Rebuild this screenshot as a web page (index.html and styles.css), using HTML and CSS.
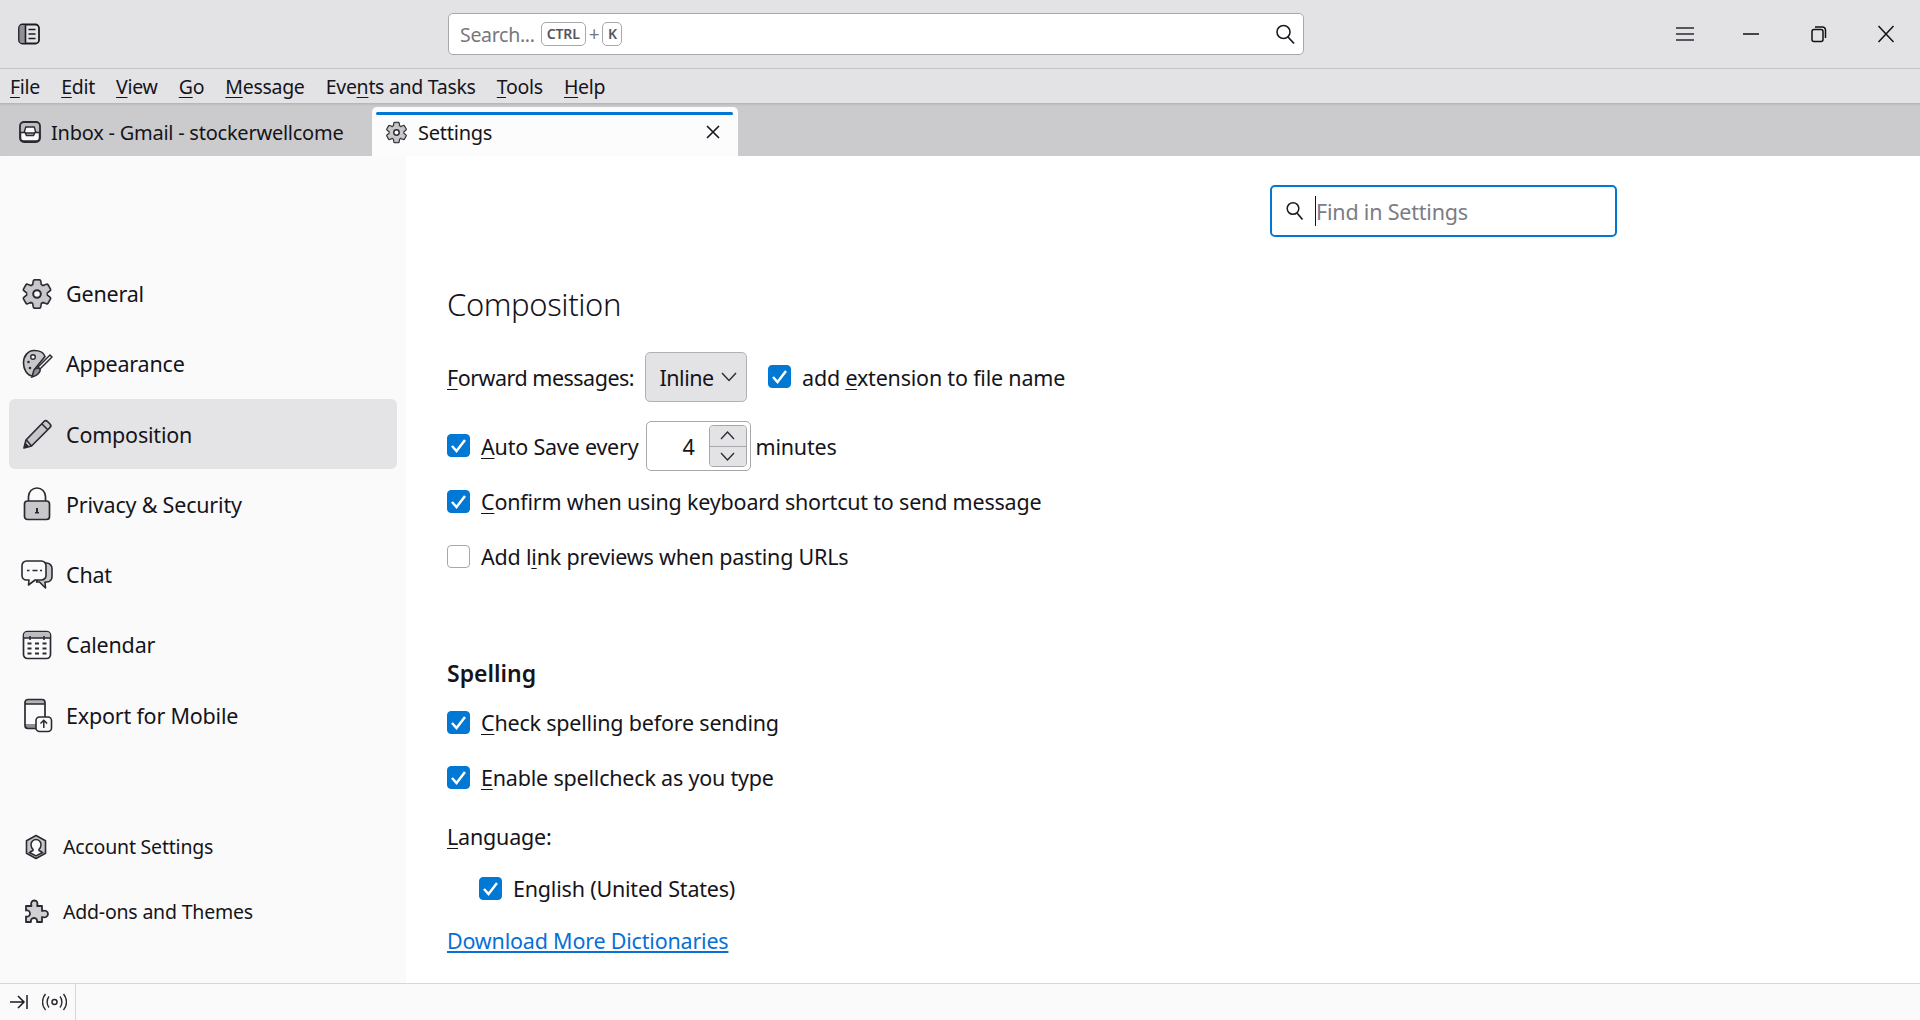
FILE: index.html
```html
<!DOCTYPE html>
<html lang="en">
<head>
  <meta charset="UTF-8">
  <title>Settings</title>
  <link rel="stylesheet" href="styles.css">
</head>
<body>
  <div class="titlebar">
    <svg class="spaces-btn" width="24" height="24" viewBox="0 0 24 24"><rect x="2" y="2.500" width="20" height="19" rx="3.500" fill="none" stroke="#1c1b22" stroke-width="1.800"/><path d="M2.500 4.500a2 2 0 0 1 2-1.500H8v18H4.500a2 2 0 0 1-2-2z" fill="#8f8f96"/><path d="M8.500 3v18M11.500 7.500h7M11.500 12h7M11.500 16.500h7" stroke="#1c1b22" stroke-width="1.600" fill="none"/></svg>
    <div class="global-search">
      <span class="search-text">Search...</span>
      <span class="key key-ctrl">CTRL</span>
      <span class="plus">+</span>
      <span class="key">K</span>
      <svg class="search-end" width="22" height="22" viewBox="0 0 22 22"><circle cx="9.500" cy="9" r="6.500" fill="none" stroke="#1c1b22" stroke-width="1.600"/><path d="M14 14l6 6.500" stroke="#1c1b22" stroke-width="1.800"/></svg>
    </div>
    <div class="win-btns">
      <svg class="win-menu" width="18" height="18" viewBox="0 0 18 18"><path d="M0 3h18M0 9h18M0 15h18" stroke="#2b2a33" stroke-width="1.700"/></svg>
      <svg width="16" height="18" viewBox="0 0 16 18"><path d="M0 9h16" stroke="#111" stroke-width="1.500"/></svg>
      <svg class="win-restore" width="18" height="18" viewBox="0 0 18 18"><rect x="2" y="4.500" width="11" height="12" rx="2" fill="none" stroke="#111" stroke-width="1.500"/><path d="M5 2h7.500a3 3 0 0 1 3 3v8" fill="none" stroke="#111" stroke-width="1.500"/></svg>
      <svg width="18" height="18" viewBox="0 0 18 18"><path d="M1.500 1l15 16M16.500 1l-15 16" stroke="#111" stroke-width="1.500"/></svg>
    </div>
  </div>

  <div class="menubar">
    <span><u>F</u>ile</span>
    <span><u>E</u>dit</span>
    <span><u>V</u>iew</span>
    <span><u>G</u>o</span>
    <span><u>M</u>essage</span>
    <span>Eve<u>n</u>ts and Tasks</span>
    <span><u>T</u>ools</span>
    <span><u>H</u>elp</span>
  </div>

  <div class="tabbar">
    <div class="tab">
      <svg width="22" height="22" viewBox="0 0 22 22"><rect x="1" y="1" width="20" height="20" rx="4" fill="#bdbdc1" stroke="#2b2a33" stroke-width="1.800"/><path d="M5 12l1.800-6h8.400l1.800 6z" fill="#fafafa" stroke="#2b2a33" stroke-width="1.400"/><path d="M1.500 11.500h4.500l1.500 3h7l1.500-3h4.500v5.500a3 3 0 0 1-3 3H4.500a3 3 0 0 1-3-3z" fill="#fafafa" stroke="#2b2a33" stroke-width="1.500"/></svg>
      <span>Inbox - Gmail - stockerwellcome</span>
    </div>
    <div class="tab tab-active">
      <svg width="23" height="23" viewBox="0 0 32 32"><use href="#gear"/></svg>
      <span>Settings</span>
      <svg class="tab-close" width="14" height="14" viewBox="0 0 14 14"><path d="M1 1l12 12M13 1L1 13" stroke="#1c1b22" stroke-width="1.700"/></svg>
    </div>
  </div>

  <svg class="defs" width="0" height="0">
    <defs>
      <path id="gear-shape" d="M12.410 6.130L13.140 1.280H18.860L19.590 6.130L22.750 7.960L27.320 6.160L30.180 11.110L26.340 14.180V17.820L30.180 20.890L27.320 25.840L22.750 24.040L19.590 25.870L18.860 30.720H13.140L12.410 25.870L9.250 24.040L4.680 25.840L1.820 20.890L5.660 17.820V14.180L1.820 11.110L4.680 6.160L9.250 7.960z" transform="translate(16 16) scale(.88) translate(-16 -16)" stroke-linejoin="round"/>
      <g id="gear">
        <use href="#gear-shape" fill="#2b2a33" stroke="#2b2a33" stroke-width="4.600"/>
        <use href="#gear-shape" fill="#c8c8cb" stroke="#c8c8cb" stroke-width="1"/>
        <circle cx="16" cy="16" r="3.800" fill="#fafafa" stroke="#2b2a33" stroke-width="2"/>
      </g>
    </defs>
  </svg>

  <div class="main">
    <div class="sidebar">
      <div class="nav-top">
        <div class="nav-item">
          <svg width="32" height="32" viewBox="0 0 32 32"><use href="#gear"/></svg>
          <span>General</span>
        </div>
        <div class="nav-item">
          <svg width="32" height="32" viewBox="0 0 32 32"><path d="M13 2.500c6 0 10 2.500 11 6l-9 11c-1 1-1.500 3-1 5 .5 2-.5 4-3 3.500C6 27 2.500 21.500 2.500 15 2.500 8 7 2.500 13 2.500z" fill="#c8c8cb" stroke="#2b2a33" stroke-width="1.600"/><circle cx="12" cy="9" r="2.300" fill="#fafafa" stroke="#2b2a33" stroke-width="1.400"/><circle cx="7.500" cy="14" r="1.300" fill="#2b2a33"/><circle cx="9" cy="20" r="1.300" fill="#2b2a33"/><path d="M17 19L29 7l2 2-12 12z" fill="#fafafa" stroke="#2b2a33" stroke-width="1.500"/><path d="M13 22c2-3 5-2 6-1 1 3-3 7-8 8 1-2 1-5 2-7z" fill="#8f8f96" stroke="#2b2a33" stroke-width="1.500"/></svg>
          <span>Appearance</span>
        </div>
        <div class="nav-item selected">
          <svg width="32" height="32" viewBox="0 0 32 32"><path d="M3 30l2-8L23 3.500a2.500 2.500 0 0 1 3.500 0l2.500 2.500a2.500 2.500 0 0 1 0 3.500L10.500 28z" fill="#c8c8cb" stroke="#2b2a33" stroke-width="1.700" stroke-linejoin="round"/><path d="M3 30l1.300-5.500 4.200 4.200z" fill="#2b2a33"/><path d="M5.500 22l5 6M21 6l5.500 5.500" stroke="#2b2a33" stroke-width="1.500"/></svg>
          <span>Composition</span>
        </div>
        <div class="nav-item">
          <svg width="32" height="34" viewBox="0 0 32 34"><path d="M7.500 15V9.500a8.500 8.500 0 0 1 17 0V15" fill="none" stroke="#2b2a33" stroke-width="1.700"/><rect x="3.500" y="14" width="25" height="18.500" rx="3" fill="#c8c8cb" stroke="#2b2a33" stroke-width="1.700"/><path d="M15 21h2v4h1v1.500h-4V25h1z" fill="#2b2a33"/></svg>
          <span>Privacy &amp; Security</span>
        </div>
        <div class="nav-item">
          <svg width="32" height="32" viewBox="0 0 32 32"><path d="M22 4h3.500A5.500 5.500 0 0 1 31 9.500V18a5 5 0 0 1-5 5h-2l.5 6-6-6h-3z" fill="#c8c8cb" stroke="#2b2a33" stroke-width="1.600" stroke-linejoin="round"/><path d="M5.500 2h15A4.500 4.500 0 0 1 25 6.500v10a4.500 4.500 0 0 1-4.500 4.500H14l-6.500 5 .5-5H5.500A4.500 4.500 0 0 1 1 16.500v-10A4.500 4.500 0 0 1 5.500 2z" fill="#fafafa" stroke="#2b2a33" stroke-width="1.600" stroke-linejoin="round"/><path d="M6 11.500h2.500M11.500 11.500h5M19 11.500h2" stroke="#2b2a33" stroke-width="1.300"/></svg>
          <span>Chat</span>
        </div>
        <div class="nav-item">
          <svg width="32" height="32" viewBox="0 0 32 32"><rect x="2.500" y="2.500" width="27" height="27" rx="4" fill="#fafafa" stroke="#2b2a33" stroke-width="1.700"/><path d="M3 9V6a3 3 0 0 1 3-3h20a3 3 0 0 1 3 3v3z" fill="#bdbdc1"/><path d="M3 9h26M9 7v4M23 7v4" stroke="#2b2a33" stroke-width="1.500"/><path d="M6.500 14.500h4M14 14.500h4M21.500 14.500h4M6.500 19.500h4M14 19.500h4M21.500 19.500h4M6.500 24.500h4M14 24.500h4M21.500 24.500h4" stroke="#2b2a33" stroke-width="1.800"/></svg>
          <span>Calendar</span>
        </div>
        <div class="nav-item">
          <svg width="32" height="36" viewBox="0 0 32 36"><path d="M4 5.500a3 3 0 0 1 3-3h14a3 3 0 0 1 3 3V7H4z" fill="#b4b4b8"/><path d="M4 27h11v4.500H7a3 3 0 0 1-3-3z" fill="#8f8f96"/><path d="M15 31.500H7a3 3 0 0 1-3-3v-23a3 3 0 0 1 3-3h14a3 3 0 0 1 3 3V20M4 7h20" fill="none" stroke="#2b2a33" stroke-width="1.700"/><rect x="15" y="20" width="15.500" height="14.500" rx="3.500" fill="#fafafa" stroke="#2b2a33" stroke-width="1.600"/><path d="M22.800 31v-7.500M19.500 26.500l3.300-3.300 3.300 3.300" fill="none" stroke="#2b2a33" stroke-width="1.500"/></svg>
          <span>Export for Mobile</span>
        </div>
      </div>
      <div class="nav-bottom">
        <div class="nav-item small">
          <svg width="24" height="26" viewBox="0 0 24 26"><path d="M12 1.500l9.500 5.300v12.400L12 24.500l-9.500-5.300V6.800z" fill="#c8c8cb" stroke="#2b2a33" stroke-width="1.600" stroke-linejoin="round"/><path d="M12 5.500a5 5 0 0 1 5 5c0 2.500-1 4-2 4.800v1.200c1.500.6 2.600 1.200 3.500 2L12 22l-6.500-3.500c.9-.8 2-1.400 3.500-2v-1.200c-1-.8-2-2.300-2-4.800a5 5 0 0 1 5-5z" fill="#fafafa" stroke="#2b2a33" stroke-width="1.500"/></svg>
          <span>Account Settings</span>
        </div>
        <div class="nav-item small">
          <svg width="26" height="26" viewBox="0 0 26 26"><path d="M3 7h5.500c-1-3 0-5.500 2.800-5.500s3.800 2.500 2.800 5.500H19v5c3-1 6 0 6 3s-3 4-6 3v5h-5c.5-2-.5-4-3-4s-3.500 2-3 4H3v-5.500c2 .5 4-.5 4-3s-2-3.500-4-3z" fill="#d0d0d3" stroke="#2b2a33" stroke-width="1.800" stroke-linejoin="round"/></svg>
          <span>Add-ons and Themes</span>
        </div>
      </div>
    </div>

    <div class="content">
      <div class="find-row">
        <div class="find-box">
          <svg width="20" height="20" viewBox="0 0 20 20"><circle cx="8" cy="7.500" r="5.800" fill="none" stroke="#1c1b22" stroke-width="1.500"/><path d="M12 12l5.500 6.500" stroke="#1c1b22" stroke-width="1.700"/></svg>
          <span class="caret"></span>
          <span class="find-text">Find in Settings</span>
        </div>
      </div>

      <h1>Composition</h1>

      <div class="row row-forward">
        <span class="forward-label"><u>F</u>orward messages:</span>
        <div class="select">Inline
          <svg width="16" height="10" viewBox="0 0 16 10"><path d="M1 1l7 7.500L15 1" fill="none" stroke="#2b2a33" stroke-width="1.400"/></svg>
        </div>
        <span class="cb on"><svg width="17" height="15" viewBox="0 0 17 15"><path d="M2 8l4.500 5L15 2" fill="none" stroke="#fff" stroke-width="2.500"/></svg></span>
        <span>add <u>e</u>xtension to file name</span>
      </div>

      <div class="row row-auto">
        <span class="cb on"><svg width="17" height="15" viewBox="0 0 17 15"><path d="M2 8l4.500 5L15 2" fill="none" stroke="#fff" stroke-width="2.500"/></svg></span>
        <span><u>A</u>uto Save every</span>
        <div class="number">
          <span class="num-val">4</span>
          <div class="spin">
            <div class="spin-btn"><svg width="15" height="9" viewBox="0 0 15 9"><path d="M1 8l6.500-7L14 8" fill="none" stroke="#2b2a33" stroke-width="1.300"/></svg></div>
            <div class="spin-btn"><svg width="15" height="9" viewBox="0 0 15 9"><path d="M1 1l6.500 7L14 1" fill="none" stroke="#2b2a33" stroke-width="1.300"/></svg></div>
          </div>
        </div>
        <span>minutes</span>
      </div>

      <div class="row row-confirm">
        <span class="cb on"><svg width="17" height="15" viewBox="0 0 17 15"><path d="M2 8l4.500 5L15 2" fill="none" stroke="#fff" stroke-width="2.500"/></svg></span>
        <span><u>C</u>onfirm when using keyboard shortcut to send message</span>
      </div>

      <div class="row row-preview">
        <span class="cb"></span>
        <span>Add l<u>i</u>nk previews when pasting URLs</span>
      </div>

      <h2>Spelling</h2>

      <div class="row row-check">
        <span class="cb on"><svg width="17" height="15" viewBox="0 0 17 15"><path d="M2 8l4.500 5L15 2" fill="none" stroke="#fff" stroke-width="2.500"/></svg></span>
        <span><u>C</u>heck spelling before sending</span>
      </div>

      <div class="row row-enable">
        <span class="cb on"><svg width="17" height="15" viewBox="0 0 17 15"><path d="M2 8l4.500 5L15 2" fill="none" stroke="#fff" stroke-width="2.500"/></svg></span>
        <span><u>E</u>nable spellcheck as you type</span>
      </div>

      <div class="row row-lang"><span><u>L</u>anguage:</span></div>

      <div class="row row-english">
        <span class="cb on"><svg width="17" height="15" viewBox="0 0 17 15"><path d="M2 8l4.500 5L15 2" fill="none" stroke="#fff" stroke-width="2.500"/></svg></span>
        <span>English (United States)</span>
      </div>

      <div class="row row-link"><a href="#">Download More Dictionaries</a></div>
    </div>
  </div>

  <div class="statusbar">
    <div class="status-btns">
      <svg width="18" height="16" viewBox="0 0 18 16"><path d="M0 8h14M8 2l6 6-6 6M17 1v14" fill="none" stroke="#1c1b22" stroke-width="1.500"/></svg>
      <svg width="25" height="18" viewBox="0 0 25 18"><circle cx="12.500" cy="9" r="2.500" fill="none" stroke="#2b2a33" stroke-width="1.500"/><path d="M7 3.500c-2.500 3-2.500 8 0 11M18 3.500c2.500 3 2.500 8 0 11M3.500 1c-4 4.500-4 11.500 0 16M21.500 1c4 4.500 4 11.500 0 16" fill="none" stroke="#2b2a33" stroke-width="1.400"/></svg>
    </div>
  </div>
</body>
</html>
```

FILE: styles.css
```css
* {
  box-sizing: border-box;
}
html, body {
  height: 100%;
}
body {
  margin: 0;
  font-family: "Noto Sans", "Open Sans", sans-serif;
  font-size: 21.5px;
  letter-spacing: -0.2px;
  color: #15141a;
  background: #fff;
  display: flex;
  flex-direction: column;
  overflow: hidden;
}
u {
  text-underline-offset: 3px;
  text-decoration-thickness: 1px;
}
.defs {
  position: absolute;
}

/* title bar */
.titlebar {
  height: 69px;
  flex: none;
  background: #e3e3e6;
  border-bottom: 1px solid #c3c3c6;
  display: flex;
  align-items: center;
  padding: 0 25px 0 17px;
}
.spaces-btn {
  flex: none;
}
.global-search {
  width: 856px;
  height: 42px;
  margin-left: 407px;
  background: #fff;
  border: 1px solid #a8a8ac;
  border-radius: 5px;
  display: flex;
  align-items: center;
  padding: 0 7px 0 11px;
  color: #77777d;
}
.search-text {
  font-size: 19.5px;
  letter-spacing: -0.3px;
}
.key {
  height: 24px;
  min-width: 20px;
  padding: 0 3px;
  border: 1px solid #a8a8ac;
  border-radius: 5px;
  font-size: 14px;
  font-weight: 600;
  line-height: 21px;
  color: #55555c;
  text-align: center;
}
.key-ctrl {
  margin-left: 6px;
  width: 45px;
}
.plus {
  margin: 0 3px;
  font-size: 19px;
}
.search-end {
  margin-left: auto;
}
.win-btns {
  margin-left: auto;
  display: flex;
  align-items: center;
  gap: 50px;
}
.win-menu {
  margin-right: -1px;
}
.win-restore {
  margin: 0 -1px 0 1px;
}

/* menu bar */
.menubar {
  height: 34px;
  flex: none;
  background: #e3e3e6;
  display: flex;
  align-items: center;
  gap: 21.2px;
  padding-left: 10px;
  font-size: 19.5px;
  letter-spacing: -0.3px;
}

/* tabs */
.tabbar {
  height: 53px;
  flex: none;
  background: #cbcbce;
  box-shadow: inset 0 3px 3px -2px rgba(0, 0, 0, 0.15);
  display: flex;
  align-items: flex-end;
  font-size: 20px;
  letter-spacing: -0.24px;
}
.tab {
  height: 49px;
  width: 372px;
  padding: 1px 0 0 19px;
  display: flex;
  align-items: center;
  gap: 10px;
}
.tab-active {
  width: 366px;
  padding: 1px 18px 0 13px;
  position: relative;
  background: #fcfcfc;
  border-radius: 5px 5px 0 0;
}
.tab-active::before {
  content: "";
  position: absolute;
  top: 5px;
  left: 4px;
  right: 5px;
  height: 3px;
  border-radius: 2px;
  background: #0078d4;
}
.tab-close {
  margin-left: auto;
}

/* main area */
.main {
  flex: 1;
  display: flex;
  min-height: 0;
}
.sidebar {
  width: 406px;
  flex: none;
  background: #fafafa;
  padding: 102.5px 9px 0 9px;
}
.nav-item {
  height: 70.25px;
  display: flex;
  align-items: center;
  gap: 13px;
  padding-left: 12px;
  border-radius: 6px;
  font-size: 21.5px;
}
.nav-item svg {
  flex: none;
  width: 32px;
}
.nav-item.selected {
  background: #e4e4e7;
}
.nav-bottom {
  margin-top: 64px;
}
.nav-item.small {
  height: 65px;
  font-size: 19.5px;
  gap: 14px;
  padding-left: 14px;
}
.nav-item.small svg {
  width: 26px;
}

.content {
  flex: 1;
  padding: 29px 0 0 41px;
  background: #fff;
}
.find-row {
  width: 1170px;
  display: flex;
  justify-content: flex-end;
}
.find-box {
  width: 347px;
  height: 52px;
  border: 2.5px solid #0078d4;
  border-radius: 5px;
  display: flex;
  align-items: center;
  padding-left: 13px;
}
.caret {
  width: 1px;
  height: 30px;
  margin-left: 10px;
  background: #15141a;
}
.find-text {
  color: #7c7c84;
}
h1 {
  margin: 45px 0 0;
  height: 44px;
  line-height: 44px;
  font-size: 31px;
  font-weight: 300;
  letter-spacing: -0.4px;
}
h2 {
  margin: 87px 0 0;
  height: 30px;
  line-height: 30px;
  font-size: 23px;
  font-weight: 600;
  letter-spacing: 0;
}
.row {
  display: flex;
  align-items: center;
  height: 30px;
}
.row-forward {
  height: 50px;
  margin-top: 26px;
  gap: 11px;
}
.forward-label {
  letter-spacing: -0.5px;
}
.row-auto {
  height: 50px;
  margin-top: 19px;
}
.row-confirm {
  margin-top: 15px;
}
.row-preview {
  margin-top: 25px;
}
.row-check {
  margin-top: 19px;
}
.row-enable {
  margin-top: 25px;
}
.row-lang {
  margin-top: 29px;
}
.row-english {
  margin-top: 22px;
  padding-left: 32px;
}
.row-link {
  margin-top: 22px;
}
a {
  color: #0a6fd6;
}
.cb {
  width: 23px;
  height: 23px;
  flex: none;
  margin-right: 11px;
  border: 1px solid #a8a8ac;
  border-radius: 4px;
  display: flex;
  align-items: center;
  justify-content: center;
}
.cb.on {
  background: #0078d4;
  border-color: #0078d4;
}
.row-forward .cb,
.row-auto .cb {
  margin-bottom: 2px;
}
.select {
  width: 102px;
  height: 50px;
  padding-left: 4px;
  background: #e3e3e6;
  border: 1px solid #b1b1b5;
  border-radius: 5px;
  display: flex;
  align-items: center;
  justify-content: center;
  gap: 7px;
  letter-spacing: -0.5px;
}
.row-forward .cb {
  margin-left: 10px;
  margin-right: 0;
}
.number {
  width: 105px;
  height: 50px;
  margin: 0 5px 0 7px;
  border: 1px solid #a8a8ac;
  border-radius: 5px;
  display: flex;
  align-items: center;
  justify-content: flex-end;
  padding-right: 3px;
}
.num-val {
  margin-right: 14px;
}
.spin {
  width: 38px;
  height: 42px;
  display: flex;
  flex-direction: column;
  border: 1px solid #a8a8ac;
  border-radius: 4px;
  overflow: hidden;
}
.spin-btn {
  flex: 1;
  background: #e3e3e6;
  display: flex;
  align-items: center;
  justify-content: center;
}
.spin-btn + .spin-btn {
  border-top: 1px solid #a8a8ac;
}

/* status bar */
.statusbar {
  height: 37px;
  flex: none;
  background: #fafafa;
  border-top: 1px solid #d7d7da;
}
.status-btns {
  width: 76px;
  height: 100%;
  border-right: 1px solid #d7d7da;
  display: flex;
  align-items: center;
  gap: 14px;
  padding-left: 10px;
}
```
